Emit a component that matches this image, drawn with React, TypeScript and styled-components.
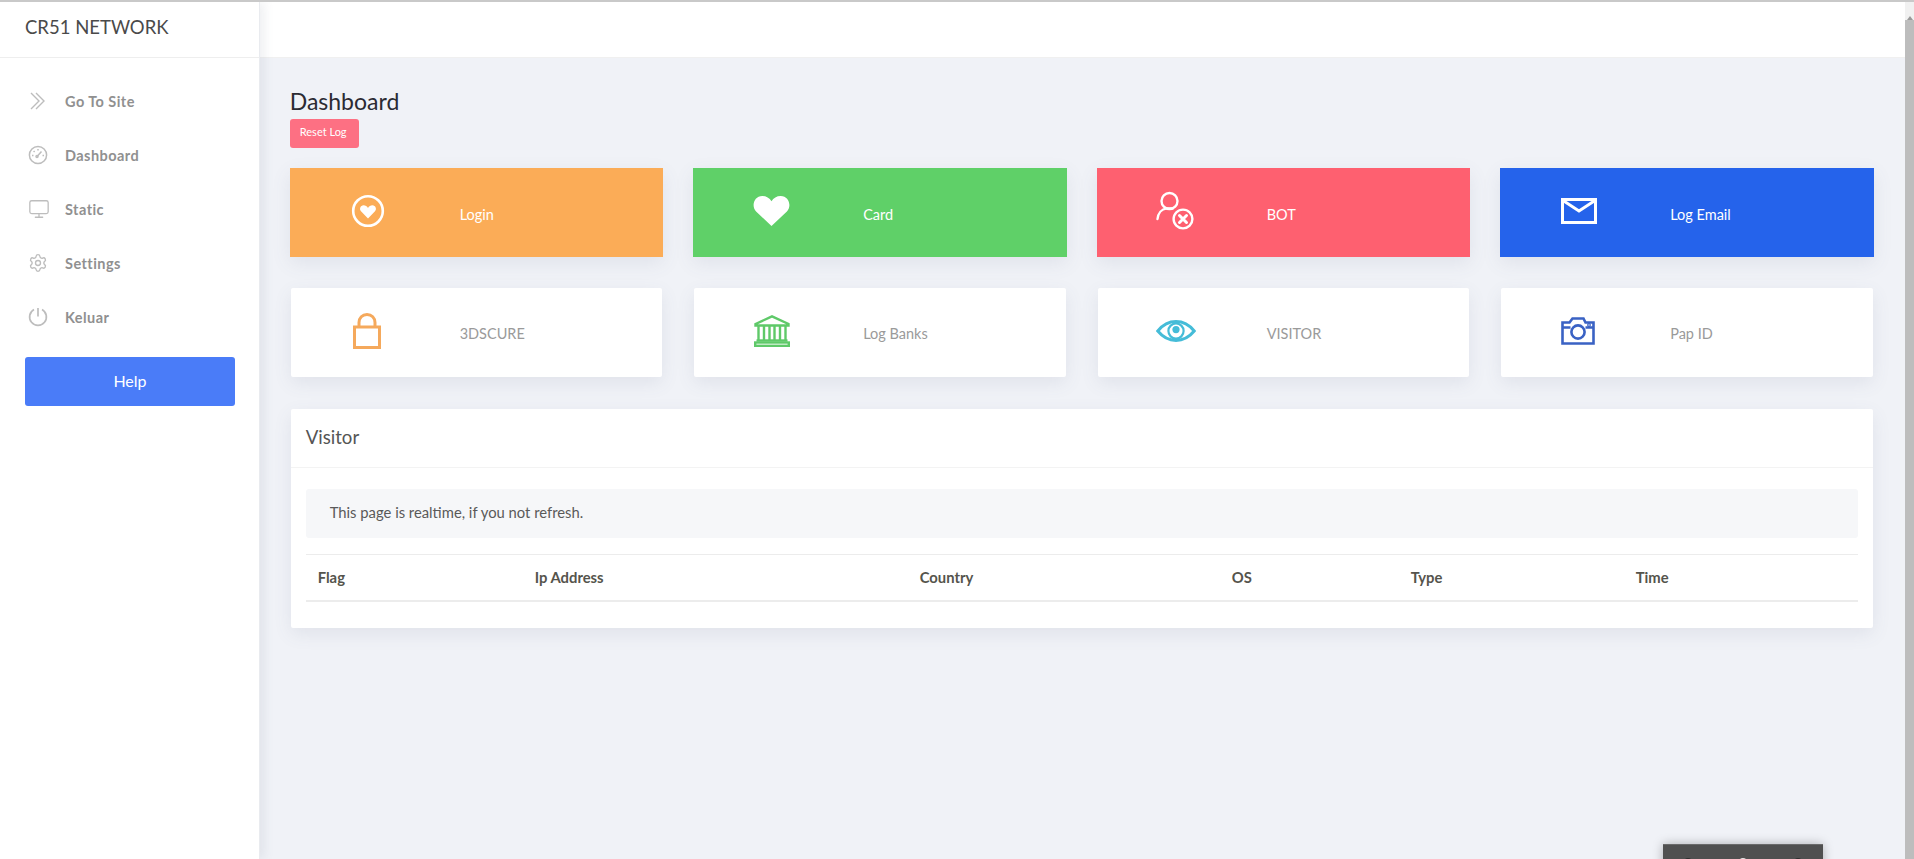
import React from "react";
import styled, { createGlobalStyle } from "styled-components";
import { Monitor, Settings } from "lucide-react";

const GlobalStyle = createGlobalStyle`
  html, body {
    margin: 0;
    height: 100%;
    overflow: hidden;
    background: #f0f2f7;
    font-family: "Lato", "Open Sans", sans-serif;
  }
  * { box-sizing: border-box; }
`;

const Page = styled.div`
  position: relative;
  display: flex;
  height: 100vh;
  border-top: 2px solid #c9c9c9;
  overflow: hidden;
`;

const Sidebar = styled.aside`
  width: 260px;
  flex: none;
  background: #fff;
  border-right: 1px solid #e9ebef;
  box-shadow: 4px 0 10px rgba(90, 100, 120, 0.1);
  z-index: 1;
`;

const Brand = styled.div`
  height: 56px;
  padding: 0 25px 5px;
  display: flex;
  align-items: center;
  border-bottom: 1px solid #eeeeee;
  font-size: 18.5px;
  color: #4a4a4a;
`;

const Nav = styled.nav`
  padding: 16px 25px 0;
`;

const NavItem = styled.a`
  height: 54px;
  display: flex;
  align-items: center;
  color: #909090;
  font-size: 14.5px;
  font-weight: 700;
  letter-spacing: 0.45px;
`;

const NavIcon = styled.span`
  width: 40px;
  flex: none;
  display: flex;
  align-items: center;
  padding-left: 3px;
  color: #bdbdbd;
`;

const HelpButton = styled.button`
  display: block;
  width: 210px;
  height: 49px;
  margin-top: 13px;
  padding: 0 0 2px;
  border: 0;
  border-radius: 3px;
  background: #4a7cf8;
  color: #fff;
  font: 400 16px "Lato", sans-serif;
`;

const Main = styled.main`
  flex: 1;
  min-width: 0;
`;

const TopBar = styled.header`
  height: 56px;
  background: #fff;
  border-bottom: 1px solid #f0f0f0;
`;

const Content = styled.div`
  padding: 29px 32.3px 0 30.7px;
`;

const Title = styled.h1`
  margin: 0 0 4px -1px;
  font-size: 23px;
  line-height: 28px;
  font-weight: 400;
  color: #2b2b33;
`;

const ResetButton = styled.button`
  display: block;
  width: 69px;
  height: 29px;
  margin: 0 0 20px -1px;
  padding: 0 2px 4px 0;
  border: 0;
  border-radius: 3px;
  background: #fd7083;
  color: #fff;
  font: 400 11px "Lato", sans-serif;
`;

const CardGrid = styled.section`
  display: grid;
  grid-template-columns: repeat(4, 1fr);
  gap: 31px 32px;
`;

const StatCard = styled.div<{ $bg?: string }>`
  height: 89px;
  display: flex;
  align-items: center;
  margin: 0 ${(p) => (p.$bg ? "-1px" : "0")};
  padding-left: ${(p) => (p.$bg ? "59px" : "58px")};
  background: ${(p) => p.$bg || "#fff"};
  color: ${(p) => (p.$bg ? "#fff" : "#9a9a9a")};
  border-radius: ${(p) => (p.$bg ? "0" : "2px")};
  box-shadow: 0 6px 18px rgba(90, 100, 130, 0.1);
  font-size: 14.5px;
`;

const CardIcon = styled.span<{ $color?: string; $shift?: number }>`
  width: 111px;
  flex: none;
  display: flex;
  margin-top: -3px;
  padding-left: ${(p) => p.$shift || 0}px;
  color: ${(p) => p.$color || "#fff"};
`;

const CardLabel = styled.span<{ $filled?: boolean }>`
  padding-top: ${(p) => (p.$filled ? "3px" : "2px")};
`;

const Panel = styled.section`
  margin-top: 32px;
  height: 219px;
  background: #fff;
  border-radius: 2px;
  box-shadow: 0 6px 18px rgba(90, 100, 130, 0.1);
`;

const PanelHead = styled.div`
  height: 59px;
  padding: 0 15px 2px;
  display: flex;
  align-items: center;
  border-bottom: 1px solid #f3f3f3;
  font-size: 18.6px;
  color: #555;
`;

const PanelBody = styled.div`
  padding: 21px 15px 0;
`;

const Notice = styled.div`
  height: 49px;
  padding: 0 24px 3px;
  display: flex;
  align-items: center;
  border-radius: 3px;
  background: #f6f7f9;
  font-size: 14.8px;
  color: #5a5a5a;
`;

const VisitorTable = styled.table`
  width: 100%;
  margin-top: 16px;
  table-layout: fixed;
  border-collapse: collapse;
`;

const HeadCell = styled.th<{ $width?: number }>`
  width: ${(p) => (p.$width ? `${p.$width}px` : "auto")};
  height: 46px;
  padding: 0 12px;
  text-align: left;
  border-top: 1px solid #ececec;
  border-bottom: 2px solid #ececec;
  font-size: 14.8px;
  font-weight: 700;
  color: #55544c;
`;

const Scrollbar = styled.div`
  width: 9px;
  flex: none;
  background: #bdbdbd;
`;

const ScrollCap = styled.div`
  height: 18px;
  background: #f1f1f1;
  display: flex;
  justify-content: center;
  padding-top: 9px;

  &::before {
    content: "";
    border: 3px solid transparent;
    border-top: 0;
    border-bottom: 4px solid #9a9a9a;
  }
`;

const ChatWidget = styled.div`
  position: absolute;
  left: 1663px;
  top: 842px;
  width: 160px;
  height: 40px;
  display: flex;
  justify-content: space-between;
  padding: 13px 20px 0;
  background: #505050;
  border-top: 1px solid #6a6a6a;
  box-shadow: 0 0 10px rgba(0, 0, 0, 0.28);
`;

const WidgetDot = styled.span<{ $light?: boolean }>`
  width: 10px;
  height: 10px;
  border-radius: 50%;
  background: ${(p) => (p.$light ? "#e8e8e8" : "#2e2e2e")};
`;

const ChevronsIcon = () => (
  <svg width="18" height="18" viewBox="0 0 18 18" fill="none" stroke="currentColor" strokeWidth="1.4">
    <path d="M3 1l8 8-8 8M8 1l8 8-8 8" />
  </svg>
);

const GaugeIcon = () => (
  <svg width="20" height="20" viewBox="0 0 20 20" fill="none" stroke="currentColor" strokeWidth="1.5">
    <circle cx="10" cy="10" r="8.6" />
    <path d="M9 11.5l4.5-5M4 10.5h1.5M10 4v1.5M14.5 10.5H16M5.6 6l1 1" />
    <circle cx="9" cy="11.5" r="1" />
  </svg>
);

const PowerIcon = () => (
  <svg width="20" height="20" viewBox="0 0 20 20" fill="none" stroke="currentColor" strokeWidth="1.7">
    <path d="M6 2.6a8.4 8.4 0 1 0 8 0" />
    <path d="M10 1v8.5" />
  </svg>
);

const HeartCircleIcon = () => (
  <svg width="34" height="34" viewBox="0 0 34 34" fill="none">
    <circle cx="17" cy="17" r="14.8" stroke="currentColor" strokeWidth="2.6" />
    <path
      d="M17 24.5l-7-7.2c-2-2.2-.6-6 2.6-6 1.8 0 3.4 1 4.4 2.6 1-1.6 2.6-2.6 4.4-2.6 3.2 0 4.6 3.8 2.6 6z"
      fill="currentColor"
    />
  </svg>
);

const HeartIcon = () => (
  <svg width="39" height="32" viewBox="0 0 40 34" fill="currentColor" preserveAspectRatio="none">
    <path d="M20 33L4.2 17.5C-1 12 2 1 10.6 1c4 0 7.4 2.2 9.4 5.6C22 3.2 25.4 1 29.4 1 38 1 41 12 35.8 17.5z" />
  </svg>
);

const UserXIcon = () => (
  <svg width="40" height="40" viewBox="0 0 40 40" fill="none" stroke="currentColor" strokeWidth="2.4" strokeLinecap="round">
    <circle cx="13.5" cy="10" r="8" />
    <path d="M1.5 28c.6-6 4.2-10 9.2-10.6h6" />
    <circle cx="27" cy="28" r="9.4" />
    <path d="M23.5 24.5l7 7M30.5 24.5l-7 7" strokeWidth="3" />
  </svg>
);

const MailIcon = () => (
  <svg width="36" height="26" viewBox="0 0 36 26" fill="none" stroke="currentColor" strokeWidth="3">
    <rect x="1.5" y="1.5" width="33" height="23" />
    <path d="M2 2.5l16 10.5 16-10.5" />
  </svg>
);

const LockIcon = () => (
  <svg width="28" height="36" viewBox="0 0 28 36" fill="none" stroke="currentColor" strokeWidth="3">
    <rect x="1.5" y="14" width="25" height="20.5" />
    <path d="M6 14V9.5C6 4.8 9.4 1.5 14 1.5s8 3.3 8 8V14" />
  </svg>
);

const BankIcon = () => (
  <svg width="36" height="32" viewBox="0 0 36 32" fill="none" stroke="currentColor" strokeWidth="2.4">
    <path d="M1.5 9L18 1.4 34.5 9v1.5h-33z" />
    <path d="M4.5 10.5V25M10 10.5V25M15.5 10.5V25M20.5 10.5V25M26 10.5V25M31.5 10.5V25" />
    <path d="M2.5 25.5h31" />
    <rect x="1.2" y="27.5" width="33.6" height="3.3" />
  </svg>
);

const EyeIcon = () => (
  <svg width="40" height="22" viewBox="0 0 40 22" fill="none">
    <path d="M1.8 11C7 4.6 13 1.6 20 1.6S33 4.6 38.2 11C33 17.4 27 20.4 20 20.4S7 17.4 1.8 11z" stroke="currentColor" strokeWidth="3" />
    <circle cx="20" cy="11" r="7.6" stroke="currentColor" strokeWidth="2.2" />
    <circle cx="20" cy="9.6" r="3.6" fill="currentColor" />
  </svg>
);

const CameraIcon = () => (
  <svg width="34" height="28" viewBox="0 0 34 28" fill="none" stroke="currentColor" strokeWidth="2.6">
    <path d="M1.5 5.5h7l3-4h11l2 4h8v21h-31z" />
    <path d="M1.5 10.5h8M24.5 10.5h8" />
    <circle cx="17" cy="15" r="6.6" />
    <circle cx="28" cy="8" r="0.6" />
  </svg>
);

const navItems = [
  { label: "Go To Site", icon: <ChevronsIcon /> },
  { label: "Dashboard", icon: <GaugeIcon /> },
  { label: "Static", icon: <Monitor size={22} strokeWidth={1.4} /> },
  { label: "Settings", icon: <Settings size={20} strokeWidth={1.6} /> },
  { label: "Keluar", icon: <PowerIcon /> },
];

const statCards = [
  { label: "Login", bg: "#fbac57", shift: 2, icon: <HeartCircleIcon /> },
  { label: "Card", bg: "#5fd068", icon: <HeartIcon /> },
  { label: "BOT", bg: "#fe6070", icon: <UserXIcon /> },
  { label: "Log Email", bg: "#2563eb", shift: 2, icon: <MailIcon /> },
  { label: "3DSCURE", color: "#f5a95c", shift: 4, icon: <LockIcon /> },
  { label: "Log Banks", color: "#5fc969", shift: 2, icon: <BankIcon /> },
  { label: "VISITOR", color: "#45bcd8", icon: <EyeIcon /> },
  { label: "Pap ID", color: "#3a62c4", shift: 2, icon: <CameraIcon /> },
];

const columns = [
  { label: "Flag", width: 217 },
  { label: "Ip Address", width: 385 },
  { label: "Country", width: 312 },
  { label: "OS", width: 179 },
  { label: "Type", width: 225 },
  { label: "Time" },
];

export default function App() {
  return (
    <Page>
      <GlobalStyle />
      <Sidebar>
        <Brand>CR51 NETWORK</Brand>
        <Nav>
          {navItems.map((item) => (
            <NavItem key={item.label}>
              <NavIcon>{item.icon}</NavIcon>
              {item.label}
            </NavItem>
          ))}
          <HelpButton>Help</HelpButton>
        </Nav>
      </Sidebar>
      <Main>
        <TopBar />
        <Content>
          <Title>Dashboard</Title>
          <ResetButton>Reset Log</ResetButton>
          <CardGrid>
            {statCards.map((card) => (
              <StatCard key={card.label} $bg={card.bg}>
                <CardIcon $color={card.color} $shift={card.shift}>
                  {card.icon}
                </CardIcon>
                <CardLabel $filled={!!card.bg}>{card.label}</CardLabel>
              </StatCard>
            ))}
          </CardGrid>
          <Panel>
            <PanelHead>Visitor</PanelHead>
            <PanelBody>
              <Notice>This page is realtime, if you not refresh.</Notice>
              <VisitorTable>
                <thead>
                  <tr>
                    {columns.map((col) => (
                      <HeadCell key={col.label} $width={col.width}>
                        {col.label}
                      </HeadCell>
                    ))}
                  </tr>
                </thead>
              </VisitorTable>
            </PanelBody>
          </Panel>
        </Content>
      </Main>
      <Scrollbar>
        <ScrollCap />
      </Scrollbar>
      <ChatWidget>
        <WidgetDot />
        <WidgetDot $light />
        <WidgetDot />
      </ChatWidget>
    </Page>
  );
}
